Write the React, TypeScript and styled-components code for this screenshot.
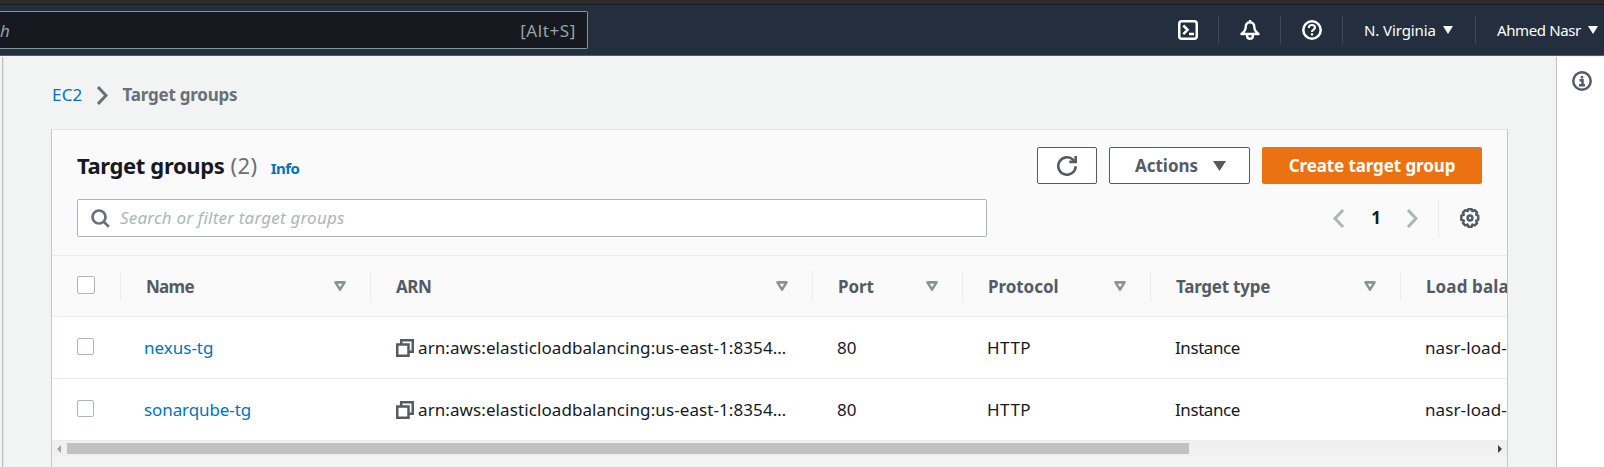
import React from "react";
import styled, { createGlobalStyle } from "styled-components";

const color = {
  nav: "#232f3e",
  page: "#f2f3f3",
  line: "#eaeded",
  ink: "#16191f",
  grey: "#545b64",
  muted: "#687078",
  soft: "#aab7b8",
  link: "#0073bb",
  orange: "#ec7211",
};

const GlobalStyle = createGlobalStyle`
  * { box-sizing: border-box; }
  body {
    margin: 0;
    background: ${color.page};
    color: ${color.ink};
    font: 17px/22px "Noto Sans", "Open Sans", sans-serif;
    overflow: hidden;
  }
  svg { display: block; flex: none; }
`;

const Screen = styled.div`
  height: 467px;
  display: flex;
  flex-direction: column;
  overflow: hidden;
`;

const WindowEdge = styled.div`
  height: 5px;
  flex: none;
  background: #2b2b2b;
  border-bottom: 1px solid #191919;
`;

const NavBar = styled.header`
  height: 51px;
  flex: none;
  display: flex;
  align-items: center;
  justify-content: space-between;
  background: ${color.nav};
  border-bottom: 1px solid #545b64;
`;

const NavSearch = styled.div`
  width: 588px;
  height: 38px;
  padding-right: 11px;
  display: flex;
  align-items: center;
  justify-content: space-between;
  background: #16191f;
  border: 1px solid #879596;
  border-left: 0;
  border-radius: 0 2px 2px 0;
  color: #95a5a6;
`;

const NavHint = styled.em`
  padding-top: 1px;
`;

const NavKey = styled.span`
  padding-top: 1px;
  letter-spacing: 0.6px;
`;

const NavTools = styled.div`
  display: flex;
  align-items: center;
`;

const NavItem = styled.div<{ $width: number; $text?: boolean }>`
  width: ${(p) => p.$width}px;
  height: 28px;
  display: flex;
  align-items: center;
  justify-content: ${(p) => (p.$text ? "flex-start" : "center")};
  padding-left: ${(p) => (p.$text ? 21 : 0)}px;
  gap: 7px;
  color: #fff;
  font-size: 15px;
  white-space: nowrap;
  & + & {
    border-left: 1px solid #414750;
  }
`;

const Tracked = styled.span<{ $by: number }>`
  letter-spacing: ${(p) => p.$by}px;
`;

const Body = styled.div`
  flex: 1;
  min-height: 0;
  display: flex;
`;

const SideSliver = styled.aside`
  width: 4px;
  margin-top: 1px;
  border-right: 1px solid #e3e6e6;
  box-shadow: inset -1px 0 0 #b9c0c2;
`;

const Main = styled.main`
  flex: 1;
  min-width: 0;
  padding: 28px 48px 0 47px;
  display: flex;
  flex-direction: column;
`;

const HelpPanel = styled.aside`
  width: 48px;
  margin-top: 1px;
  padding: 14px 12px 0 15px;
  background: #fff;
  border-left: 1px solid #b9c0c2;
`;

const Breadcrumbs = styled.nav`
  height: 22px;
  padding-left: 1px;
  display: flex;
  align-items: center;
  color: ${color.muted};
  svg { margin: 0 15px 0 14px; }
`;

const Link = styled.a`
  color: ${color.link};
`;

const Crumb = styled.b`
  letter-spacing: -0.22px;
`;

const Card = styled.section`
  flex: 1;
  min-height: 0;
  margin-top: 23px;
  border: 1px solid #c3c8c9;
  border-top-color: #e4e6e6;
  border-bottom: 0;
`;

const CardHeader = styled.div`
  height: 126px;
  padding: 17px 25px 18px;
  display: flex;
  flex-direction: column;
  justify-content: space-between;
  background: #fafafa;
  border-bottom: 1px solid ${color.line};
`;

const HeaderRow = styled.div`
  display: flex;
  align-items: center;
  justify-content: space-between;
`;

const Heading = styled.div`
  padding-top: 2px;
  display: flex;
  align-items: baseline;
  font-size: 22px;
`;

const Title = styled.h1`
  margin: 0;
  font-size: 22px;
  font-weight: 700;
  letter-spacing: -0.38px;
`;

const Count = styled.span`
  margin-left: 6px;
  color: ${color.muted};
  letter-spacing: 0.5px;
`;

const InfoLink = styled.a`
  margin-left: 13px;
  color: ${color.link};
  font-size: 15px;
  font-weight: 700;
  letter-spacing: -0.5px;
`;

const Actions = styled.div`
  display: flex;
  gap: 12px;
`;

const Button = styled.button<{ $width: number; $primary?: boolean }>`
  width: ${(p) => p.$width}px;
  height: 37px;
  padding: 0;
  display: flex;
  align-items: center;
  justify-content: center;
  gap: 15px;
  font: 700 17px/22px "Noto Sans", "Open Sans", sans-serif;
  border-radius: 2px;
  border: 1px solid ${(p) => (p.$primary ? color.orange : color.grey)};
  background: ${(p) => (p.$primary ? color.orange : "#fff")};
  color: ${(p) => (p.$primary ? "#fff" : color.grey)};
`;

const ButtonLabel = styled.span`
  padding: 1px 0 0 2px;
`;

const FilterBox = styled.div`
  width: 910px;
  height: 38px;
  padding-left: 13px;
  display: flex;
  align-items: center;
  gap: 10px;
  background: #fff;
  border: 1px solid ${color.soft};
  border-radius: 2px;
  color: ${color.muted};
`;

const Placeholder = styled.em`
  color: ${color.soft};
  letter-spacing: 0.2px;
`;

const Pager = styled.div`
  display: flex;
  align-items: center;
  color: ${color.soft};
`;

const PageNumber = styled.b`
  width: 63px;
  padding-left: 1px;
  text-align: center;
  color: ${color.ink};
`;

const Preferences = styled.div`
  height: 38px;
  margin-left: 20px;
  padding: 0 2px 0 21px;
  display: flex;
  align-items: center;
  border-left: 1px solid ${color.line};
  color: ${color.grey};
`;

const Row = styled.div<{ $head?: boolean }>`
  height: ${(p) => (p.$head ? 61 : 62)}px;
  display: grid;
  grid-template-columns: 69px 250px 442px 150px 188px 250px 106px;
  align-items: center;
  overflow: hidden;
  background: ${(p) => (p.$head ? "#fafafa" : "#fff")};
  border-bottom: 1px solid ${color.line};
`;

const CheckCell = styled.div<{ $head?: boolean }>`
  height: 30px;
  padding: 5px 0 0 25px;
  border-right: ${(p) => (p.$head ? `1px solid ${color.line}` : "0")};
`;

const CheckBox = styled.div<{ $size: number }>`
  width: ${(p) => p.$size}px;
  height: ${(p) => p.$size}px;
  background: #fff;
  border: 1px solid ${color.soft};
  border-radius: 2px;
`;

const HeadCell = styled.div`
  height: 30px;
  padding: 0 24px 0 25px;
  display: flex;
  align-items: center;
  justify-content: space-between;
  border-right: 1px solid ${color.line};
  color: ${color.grey};
  font-weight: 700;
  white-space: nowrap;
  &:last-child {
    border-right: 0;
    padding-right: 0;
  }
`;

const HeadLabel = styled.span<{ $by: number }>`
  padding-top: 2px;
  letter-spacing: ${(p) => p.$by}px;
`;

const Cell = styled.div<{ $inset?: number }>`
  padding-left: ${(p) => p.$inset ?? 24}px;
  display: flex;
  align-items: center;
  gap: 4px;
  white-space: nowrap;
`;

const ScrollBar = styled.div`
  height: 15px;
  display: flex;
  align-items: center;
  justify-content: space-between;
  padding: 0 5px 0 5px;
  background: #f0f0f0;
`;

const ScrollTrack = styled.div`
  flex: 1;
  margin: 0 6px 0 6px;
`;

const ScrollThumb = styled.div`
  width: 1122px;
  height: 11px;
  background: #c1c1c1;
`;

const Caret = ({ w, h }: { w: number; h: number }) => (
  <svg width={w} height={h} viewBox="0 0 12 10" preserveAspectRatio="none" fill="currentColor">
    <path d="M0 0h12L6 10z" />
  </svg>
);

const SortIcon = () => (
  <svg width="12" height="10" viewBox="0 0 12 10" fill="none" stroke="#879596" strokeWidth="2.600" strokeLinejoin="round">
    <path d="M1.500 1.400h9L6 8.600z" />
  </svg>
);

const Chevron = ({ left = false }: { left?: boolean }) => (
  <svg width="11" height="19" viewBox="0 0 11 19" fill="none" stroke="currentColor" strokeWidth="3">
    <path d={left ? "M10 1 2 9.500l8 8.500" : "M1 1l8 8.500L1 18"} />
  </svg>
);

const TerminalIcon = () => (
  <svg width="20" height="20" viewBox="0 0 20 20" fill="none" stroke="currentColor" strokeWidth="2.500">
    <rect x="1.250" y="1.250" width="17.500" height="17.500" rx="2.500" />
    <path d="M5.300 5.500l4.300 4.300-4.300 4.300M11 13.900h5" />
  </svg>
);

const BellIcon = () => (
  <svg width="20" height="20" viewBox="0 0 20 20" fill="none" stroke="currentColor" strokeWidth="2.400" strokeLinejoin="round">
    <path d="M10 0v2.500M10 2.300c-3 0-4.300 2.200-4.300 4.700 0 3.500-1.100 4.700-4.200 7h17c-3.100-2.300-4.200-3.500-4.200-7 0-2.500-1.300-4.700-4.300-4.700z" />
    <path d="M7.200 14.500v1.700c0 1.700 1.200 2.600 2.800 2.600s2.800-.9 2.800-2.600v-1.700" />
  </svg>
);

const HelpIcon = () => (
  <svg width="20" height="20" viewBox="0 0 20 20" fill="none" stroke="currentColor" strokeWidth="2.500">
    <circle cx="10" cy="10" r="8.700" />
    <path d="M6.900 8V7.500c0-1.700 1.300-2.500 3-2.500s3.100.9 3.100 2.500c0 2.300-3 2-3 4.600M10 13.300v2.200" strokeWidth="2.200" />
  </svg>
);

const InfoIcon = () => (
  <svg width="20" height="20" viewBox="0 0 20 20" fill="none" stroke={color.grey} strokeWidth="2.500">
    <circle cx="10" cy="10" r="8.700" />
    <path d="M10 5v2.500M7.500 9.200h3v4.800M7 14.200h6" strokeWidth="2.500" />
  </svg>
);

const RefreshIcon = () => (
  <svg width="20" height="20" viewBox="0 0 20 20" fill="none" stroke="currentColor" strokeWidth="2.600">
    <path d="M18.700 10.300a8.700 8.700 0 1 1-2.500-6.400l2 2.200" />
    <path d="M18.700 0v5.900H12.300" />
  </svg>
);

const SearchIcon = () => (
  <svg width="19" height="19" viewBox="0 0 19 19" fill="none" stroke="currentColor" strokeWidth="2.700">
    <circle cx="8" cy="8" r="6.500" />
    <path d="M12.600 12.600l5.200 5.200" />
  </svg>
);

const GearIcon = () => (
  <svg width="20" height="20" viewBox="0 0 20 20" fill="none" stroke="currentColor" strokeWidth="2.500" strokeLinejoin="round">
    <path d="M8.200 1.300h3.600l.6 1.700 2.300-.8 2.300 2.300-.8 2.200 2 .9v4.200l-2 .8.8 2.600-2.200 2.200-2.400-.8-.7 2.100H8.300l-.7-2.100-2.400.8L3 15.200l.8-2.600-2.500-.8V7.600l2.500-.9L3 4.500l2.300-2.300 2.300.8z" />
    <circle cx="10" cy="10" r="2.400" />
  </svg>
);

const CopyIcon = () => (
  <svg width="18" height="18" viewBox="0 0 18 18" fill="none" stroke={color.grey} strokeWidth="2.500">
    <path d="M1.250 5.500h11.250v11.250H1.250z" />
    <path d="M5.200 5V1.250h11.550v11.450H13" />
  </svg>
);

const ScrollArrow = ({ left = false, fill }: { left?: boolean; fill: string }) => (
  <svg width="4" height="8" viewBox="0 0 4 8" fill={fill}>
    <path d={left ? "M4 0v8L0 4z" : "M0 0v8l4-4z"} />
  </svg>
);

const columns = [
  { label: "Name", by: -0.7 },
  { label: "ARN", by: -0.4 },
  { label: "Port", by: -0.09 },
  { label: "Protocol", by: -0.05 },
  { label: "Target type", by: -0.24 },
  { label: "Load bala", by: 0.12 },
];

const groups = [
  { name: "nexus-tg", by: 0 },
  { name: "sonarqube-tg", by: -0.1 },
];

export default function App() {
  return (
    <Screen>
      <GlobalStyle />
      <WindowEdge />
      <NavBar>
        <NavSearch>
          <NavHint>h</NavHint>
          <NavKey>[Alt+S]</NavKey>
        </NavSearch>
        <NavTools>
          <NavItem $width={61}><TerminalIcon /></NavItem>
          <NavItem $width={62}><BellIcon /></NavItem>
          <NavItem $width={62}><HelpIcon /></NavItem>
          <NavItem $width={133} $text>
            <Tracked $by={-0.1}>N. Virginia</Tracked>
            <Caret w={10} h={8} />
          </NavItem>
          <NavItem $width={129} $text>
            <Tracked $by={-0.38}>Ahmed Nasr</Tracked>
            <Caret w={10} h={8} />
          </NavItem>
        </NavTools>
      </NavBar>
      <Body>
        <SideSliver />
        <Main>
          <Breadcrumbs>
            <Link><Tracked $by={0.2}>EC2</Tracked></Link>
            <Chevron />
            <Crumb>Target groups</Crumb>
          </Breadcrumbs>
          <Card>
            <CardHeader>
              <HeaderRow>
                <Heading>
                  <Title>Target groups</Title>
                  <Count>(2)</Count>
                  <InfoLink>Info</InfoLink>
                </Heading>
                <Actions>
                  <Button $width={60}><RefreshIcon /></Button>
                  <Button $width={141}>
                    <ButtonLabel>Actions</ButtonLabel>
                    <Caret w={13} h={10} />
                  </Button>
                  <Button $width={220} $primary>
                    <Tracked $by={-0.1}>Create target group</Tracked>
                  </Button>
                </Actions>
              </HeaderRow>
              <HeaderRow>
                <FilterBox>
                  <SearchIcon />
                  <Placeholder>Search or filter target groups</Placeholder>
                </FilterBox>
                <Pager>
                  <Chevron left />
                  <PageNumber>1</PageNumber>
                  <Chevron />
                  <Preferences><GearIcon /></Preferences>
                </Pager>
              </HeaderRow>
            </CardHeader>
            <Row $head>
              <CheckCell $head><CheckBox $size={18} /></CheckCell>
              {columns.map((c, i) => (
                <HeadCell key={c.label}>
                  <HeadLabel $by={c.by}>{c.label}</HeadLabel>
                  {i < columns.length - 1 && <SortIcon />}
                </HeadCell>
              ))}
            </Row>
            {groups.map((g) => (
              <Row key={g.name}>
                <CheckCell><CheckBox $size={17} /></CheckCell>
                <Cell $inset={23}><Link><Tracked $by={g.by}>{g.name}</Tracked></Link></Cell>
                <Cell $inset={25}>
                  <CopyIcon />
                  <Tracked $by={0.09}>arn:aws:elasticloadbalancing:us-east-1:8354…</Tracked>
                </Cell>
                <Cell>80</Cell>
                <Cell><Tracked $by={0.5}>HTTP</Tracked></Cell>
                <Cell><Tracked $by={-0.42}>Instance</Tracked></Cell>
                <Cell><Tracked $by={0.1}>nasr-load-</Tracked></Cell>
              </Row>
            ))}
            <ScrollBar>
              <ScrollArrow left fill="#a3a3a3" />
              <ScrollTrack><ScrollThumb /></ScrollTrack>
              <ScrollArrow fill="#404040" />
            </ScrollBar>
          </Card>
        </Main>
        <HelpPanel><InfoIcon /></HelpPanel>
      </Body>
    </Screen>
  );
}
